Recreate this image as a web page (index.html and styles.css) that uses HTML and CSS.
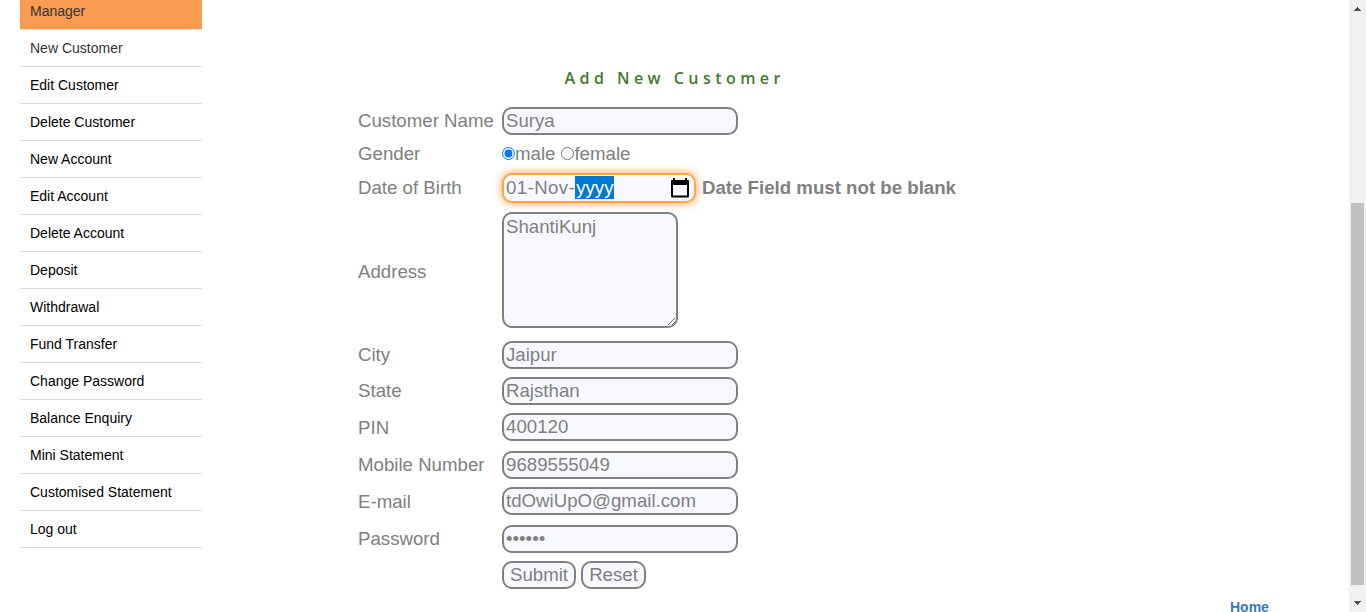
FILE: index.html
```html
<!DOCTYPE html>
<html lang="en">
<head>
<meta charset="utf-8">
<title>Add New Customer</title>
<link rel="stylesheet" href="styles.css">
</head>
<body>
<div class="page">
  <ul class="menu">
    <li class="current">Manager</li>
    <li class="hover">New Customer</li>
    <li>Edit Customer</li>
    <li>Delete Customer</li>
    <li>New Account</li>
    <li>Edit Account</li>
    <li>Delete Account</li>
    <li>Deposit</li>
    <li>Withdrawal</li>
    <li>Fund Transfer</li>
    <li>Change Password</li>
    <li>Balance Enquiry</li>
    <li>Mini Statement</li>
    <li>Customised Statement</li>
    <li>Log out</li>
  </ul>
  <main class="content">
    <h1 class="heading">Add New Customer</h1>
    <form class="form">
      <div class="row"><label>Customer Name</label><div class="cell"><input class="field" type="text" value="Surya"></div></div>
      <div class="row gender"><label>Gender</label><div class="cell"><input class="radio" type="radio" name="g" checked><span class="male">male</span><input class="radio" type="radio" name="g"><span>female</span></div></div>
      <div class="row dob"><label>Date of Birth</label><div class="cell">
        <div class="field date"><span class="typed">01-Nov-</span><span class="selected">yyyy</span>
          <svg class="calendar" width="20" height="20" viewBox="0 0 20 20"><path fill="#000" fill-rule="evenodd" d="M3 0h2v2h10V0h2v2h1q1 0 1 1v15q0 1.500-1 1.500H2Q1 19.500 1 18V3q0-1 1-1h1zM3 7v10.500h14V7z"/></svg>
        </div><b class="error">Date Field must not be blank</b></div></div>
      <div class="row address"><label>Address</label><div class="cell"><textarea class="field area">ShantiKunj</textarea></div></div>
      <div class="row"><label>City</label><div class="cell"><input class="field" type="text" value="Jaipur"></div></div>
      <div class="row"><label>State</label><div class="cell"><input class="field" type="text" value="Rajsthan"></div></div>
      <div class="row pin"><label>PIN</label><div class="cell"><input class="field" type="text" value="400120"></div></div>
      <div class="row mobile"><label>Mobile Number</label><div class="cell"><input class="field" type="text" value="9689555049"></div></div>
      <div class="row email"><label>E-mail</label><div class="cell"><input class="field" type="text" value="tdOwiUpO@gmail.com"></div></div>
      <div class="row"><label>Password</label><div class="cell"><input class="field" type="password" value="abcdef"></div></div>
      <div class="row"><span></span><div class="cell buttons"><button class="field submit" type="button">Submit</button><button class="field reset" type="button">Reset</button></div></div>
    </form>
    <a class="home">Home</a>
  </main>
  <div class="scrollbar">
    <svg class="arrow" width="17" height="17" shape-rendering="crispEdges"><path fill="#505050" d="M8 7h1v1h1v1h1v1h1v1H5v-1h1V9h1V8h1z"/></svg>
    <div class="thumb"></div>
    <svg class="arrow" width="17" height="17" shape-rendering="crispEdges"><path fill="#505050" d="M5 6h7v1h-1v1h-1v1H9v1H8V9H7V8H6V7H5z"/></svg>
  </div>
</div>
</body>
</html>
```
FILE: styles.css
```css
* { box-sizing: border-box; }
body { margin: 0; background: #fff; font-family: "Liberation Sans", Arial, sans-serif; overflow: hidden; }
.page { display: flex; height: 612px; overflow: hidden; }
.menu { list-style: none; margin: -7px 0 0 20px; padding: 0; width: 182px; flex: none; font-size: 14px; color: #000; }
.menu li { height: 37px; line-height: 36px; padding-left: 10px; border-bottom: 1px solid #ddd; }
.menu .current { background: #f99b51; background-clip: padding-box; color: #333; }
.menu .hover { color: #333; }
.content { flex: 1; display: flex; flex-direction: column; padding-left: 156px; }
.content > * { flex-shrink: 0; }
.heading { margin: 66px 0 0 206.5px; height: 37px; font: 600 16px/24px "Open Sans", sans-serif; letter-spacing: 4.45px; color: #437a2c; white-space: nowrap; }
.form { font-size: 18.67px; color: gray; }
.row { display: grid; grid-template-columns: 144px 1fr; align-items: center; height: 36px; }
.row label { line-height: 22px; white-space: nowrap; }
.cell { display: flex; align-self: start; padding-top: 4px; }
.field { width: 236px; height: 28px; margin: 0; padding: 1px 2px; border: 2px solid gray; border-radius: 10px; outline: none; background: #f8f8ff; color: gray; font: 18.67px "Liberation Sans", Arial, sans-serif; }
.gender { height: 29px; }
.gender .cell { align-self: center; align-items: center; padding: 0; line-height: 22px; }
.radio { width: 13px; height: 13px; margin: 0; accent-color: #0075ff; }
.male { margin-right: 6px; }
.dob { height: 40px; }
.dob .cell { padding-top: 5px; align-items: center; }
.date { display: flex; align-items: center; width: 194px; height: 30px; padding: 0 2px 1px; border-color: #ffa64d; box-shadow: 0 0 8px #ff9a3c; }
.typed { letter-spacing: 0.4px; }
.selected { background: #0078d7; color: #fff; line-height: 23px; padding: 0 1px; }
.calendar { margin-left: auto; margin-right: 2px; }
.error { margin-left: 6px; padding-bottom: 1px; white-space: nowrap; }
.address { height: 129px; }
.address label { padding-bottom: 2px; }
.area { width: 176px; height: 116px; padding-top: 2px; resize: both; display: block; }
.pin, .mobile { height: 37px; }
.mobile .cell { padding-top: 5px; }
.email { height: 38px; }
.buttons { gap: 5px; }
.submit { width: 74px; padding: 0; }
.reset { width: 65px; padding: 0; }
.home { margin: 5px 0 0 872px; font-size: 14px; font-weight: bold; line-height: 18px; color: #337ab7; }
.scrollbar { width: 17px; flex: none; background: #f1f1f1; display: flex; flex-direction: column; justify-content: space-between; }
.arrow { display: block; }
.thumb { width: 13px; height: 382px; margin: 176px 0 0 2px; background: #c1c1c1; }
```
